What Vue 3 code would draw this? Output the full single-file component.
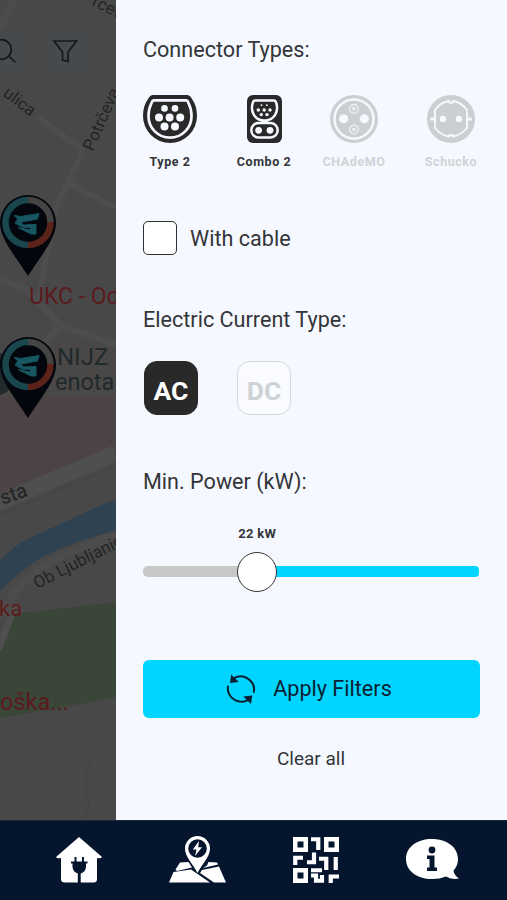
<script setup>
import { ref } from 'vue'

const withCable = ref(false)
const power = ref(22)
const thumbAt = ref(34)
const current = ref('AC')
const pins = [{ x: 28, y: 196 }, { x: 28, y: 338 }]
</script>

<template>
  <div class="app">
    <div class="main">
      <svg class="map" viewBox="0 0 116 820">
        <rect width="116" height="820" fill="#484848" />
        <g fill="none" stroke="#4d4d4d" stroke-width="8">
          <path d="M14 0L-4 36" />
          <path d="M38 117L84 151M84 151L68 182L56 208L38 300M68 182L116 208" stroke-width="6" />
          <path d="M-5 278L25 288L60 325L116 345M60 325L35 355" stroke-width="7" />
        </g>
        <path d="M0 392L45 356L62 330L116 350V446L0 495Z" fill="#4a4747" />
        <path d="M0 397H116V448L0 497Z" fill="#4c4444" />
        <path d="M-4 504L116 453" stroke="#4f4f4f" stroke-width="16" />
        <path d="M-4 517L116 466" stroke="#434343" stroke-width="1" />
        <path d="M0 560Q16 544 32 537L108 502L116 501V530Q60 546 34 562Q16 575 0 591Z" fill="#2e4252" />
        <path d="M0 618Q13 590 34 573T116 535" fill="none" stroke="#4c4c4c" stroke-width="8" />
        <path d="M14 614L116 602V697L70 706L0 718V650Z" fill="#3a4638" />
        <path d="M-2 650L15 606" stroke="#4f4f4f" stroke-width="7" />
        <path d="M90 762Q82 780 89 800L87 820" fill="none" stroke="#454545" stroke-width="2" />
        <rect x="-18" y="29" width="46" height="45" rx="5" fill="#464a4c" />
        <rect x="44" y="29" width="43" height="45" rx="5" fill="#464a4c" />
        <g fill="none" stroke="#181818" stroke-width="1.7">
          <circle cx="1.5" cy="49.5" r="9.8" />
          <path d="M8 55.5L15.5 62.5" />
          <path d="M54 41H76.500L68 52V61.500L62.500 60V52Z" />
        </g>
        <g fill="#232323" stroke="#4b4b4b" stroke-width="1.5" paint-order="stroke">
          <text transform="translate(2 95) rotate(38)" font-size="17">ulica</text>
          <text transform="translate(93 152) rotate(-66)" font-size="17">Potrčeva</text>
          <text transform="translate(91 5) rotate(27)" font-size="17">rčeva</text>
          <text transform="translate(-4 507) rotate(-19)" font-size="20">rsta</text>
          <text transform="translate(37 589) rotate(-27)" font-size="17">Ob Ljubljanici</text>
        </g>
        <g class="poi">
          <text x="29" y="304" font-size="23">UKC - Od</text>
          <text x="-1" y="616" font-size="22">ka</text>
          <text x="0" y="710" font-size="23.500">oška...</text>
        </g>
        <g fill="#202a2d">
          <circle cx="-6" cy="374" r="22" />
          <text x="57" y="365" font-size="24">NIJZ</text>
          <text x="55" y="390" font-size="23.500">enota</text>
        </g>
        <g v-for="(p, i) in pins" :key="i" :transform="`translate(${p.x} ${p.y})`">
          <path d="M0 -1A28 28 0 0 1 28 27C28 42 15 57 0 80C-15 57 -28 42 -28 27A28 28 0 0 1 0 -1Z" fill="#03060d" />
          <g fill="none" stroke-width="6.500">
            <path d="M0 49A22.500 22.500 0 0 1 0 4" stroke="#1a464e" />
            <path d="M0 4A22.500 22.500 0 0 1 22.500 26" stroke="#444" />
            <path d="M22.500 26A22.500 22.500 0 0 1 0 49" stroke="#5b2319" />
          </g>
          <path d="M-14 19.500L-7 20.500L11 17.500L9.500 23L-7 26L-5 29L8 28.500V38H3L-10 31.500L-5 32.500L2 34L3 31.500L-6 31L-13 27L-10 23Z" fill="#175762" stroke="#175762" stroke-linejoin="round" />
        </g>
      </svg>

      <section class="panel">
        <h2 class="heading">Connector Types:</h2>
        <ul class="connectors">
          <li>
            <svg width="54" height="48" viewBox="0 0 54 48">
              <path d="M10 0H44Q47 0 49 4Q54 11 54 21A27 27 0 0 1 0 21Q0 11 5 4Q7 0 10 0Z" fill="#292929" />
              <path d="M11 5.4H43Q44.500 5.400 45.500 8Q48.500 14 48.500 21.200A21.500 21.500 0 0 1 5.500 21.200Q5.500 14 8.500 8Q9.500 5.400 11 5.400Z" fill="none" stroke="#f5f9ff" stroke-width="2.700" />
              <g fill="#f5f9ff">
                <circle cx="21.5" cy="13.4" r="3.3" /><circle cx="32" cy="13.4" r="3.3" />
                <circle cx="16" cy="22.4" r="4" /><circle cx="26.6" cy="22.4" r="4" /><circle cx="37.2" cy="22.4" r="4" />
                <circle cx="21.5" cy="31.4" r="4" /><circle cx="32" cy="31.4" r="4" />
              </g>
            </svg>
            <span>Type 2</span>
          </li>
          <li>
            <svg width="35" height="48" viewBox="0 0 35 48">
              <rect width="35" height="48" rx="6" fill="#292929" />
              <g fill="none" stroke="#f5f9ff" stroke-width="2.5">
                <path d="M8 5.5H27Q28.5 5.5 29.3 8C32 17 27 25.5 17.5 25.5S3 17 5.7 8Q6.5 5.5 8 5.5Z" />
                <rect x="4.3" y="28" width="26.4" height="14.5" rx="7.2" />
              </g>
              <path d="M14 25H21V29H14Z" fill="#f5f9ff" />
              <g fill="#f5f9ff">
                <circle cx="14.5" cy="10.2" r=".9" /><circle cx="19.8" cy="10.2" r=".9" />
                <circle cx="11.3" cy="15" r="1.7" /><circle cx="17.2" cy="15" r="1.7" /><circle cx="23" cy="15" r="1.7" />
                <circle cx="14.3" cy="19.6" r="1.7" /><circle cx="20" cy="19.6" r="1.7" />
                <circle cx="11.6" cy="35.3" r="3.4" /><circle cx="23" cy="35.3" r="3.4" />
              </g>
            </svg>
            <span>Combo 2</span>
          </li>
          <li class="off">
            <svg width="48" height="48" viewBox="0 0 48 48">
              <circle cx="24" cy="24" r="24" fill="#cbcfd2" />
              <circle cx="24" cy="24" r="19.5" fill="none" stroke="#f5f9ff" stroke-width="2.5" />
              <circle cx="13.6" cy="23.8" r="4.5" fill="#f5f9ff" /><circle cx="34.4" cy="23.8" r="4.5" fill="#f5f9ff" />
              <g fill="none" stroke="#eef2f6" stroke-width="1.3">
                <circle cx="24" cy="13.8" r="4.3" /><circle cx="24" cy="34.5" r="4.3" />
                <circle cx="24" cy="13.8" r="1.3" /><circle cx="24" cy="34.5" r="1.3" />
              </g>
            </svg>
            <span>CHAdeMO</span>
          </li>
          <li class="off">
            <svg width="48" height="48" viewBox="0 0 48 48">
              <circle cx="24" cy="24" r="24" fill="#cbcfd2" />
              <path d="M8 15Q14 7 22 6Q22 8 24 8T26 6Q34 7 40 15V33Q34 40 26 41.500Q26 40 24 40T22 41.500Q14 40 8 33Z" fill="none" stroke="#f5f9ff" stroke-width="1.900" />
              <path d="M4.500 24H7M41 24H43.500" stroke="#f5f9ff" stroke-width="3" stroke-linecap="round" />
              <circle cx="16" cy="24" r="3.2" fill="#f5f9ff" /><circle cx="32" cy="24" r="3.2" fill="#f5f9ff" />
            </svg>
            <span>Schucko</span>
          </li>
        </ul>

        <label class="cable">
          <input v-model="withCable" type="checkbox" />
          <span>With cable</span>
        </label>

        <h2 class="heading">Electric Current Type:</h2>
        <div class="currents">
          <button v-for="c in ['AC', 'DC']" :key="c" :class="{ active: current === c }" @click="current = c">{{ c }}</button>
        </div>

        <h2 class="heading">Min. Power (kW):</h2>
        <div class="slider">
          <div class="before" :style="{ width: thumbAt + '%' }"></div>
          <div class="after"></div>
          <div class="thumb" :style="{ left: thumbAt + '%' }"><span>{{ power }} kW</span></div>
        </div>

        <button class="apply">
          <svg width="30" height="30" viewBox="0 0 30 30">
            <g fill="none" stroke="#0b1f33" stroke-width="2" stroke-linecap="round">
              <path d="M8 4.2Q15 .4 21.5 4.4C26.5 7.7 29 12.5 27.8 18" />
              <path d="M2 12.5C1 18 4 23.5 9 26.2Q15 29.3 21.5 26.3" />
            </g>
            <path d="M5.200 .500L4 9L12.800 8ZM17.200 22.500L26.300 21.500L25 30Z" fill="#0b1f33" />
          </svg>
          <span>Apply Filters</span>
        </button>
        <button class="clear">Clear all</button>
      </section>
    </div>

    <nav class="nav">
      <svg width="46" height="46" viewBox="0 0 46 46">
        <path d="M23 0L46 20Q45 22 41 21V42Q41 45.500 37.500 45.500H24.700V36.500Q29.500 35 30 30V26.500H31.500V24.500H28V20H26V24.500H20.500V20H18.500V24.500H15V26.500H16.500V30Q17 35 21.800 36.500V45.500H9Q5 45.500 5 42V21Q1 22 0 20Z" fill="#fff" />
      </svg>
      <svg width="57" height="47" viewBox="0 0 57 47">
        <path d="M11 26.500L19.500 26L23 31.500L8 35L6.500 33.500ZM4.500 36L22 33.500L41 46.500H0ZM38 29.500L39.500 26L48 26.500L49 28.500L34 32ZM33 34L50 30.500L57 46.500H45L31 37Z" fill="#fff" />
        <path d="M28.500 0A12.500 12.500 0 0 1 41 12.500C41 21 33 28 28.500 37C24 28 16 21 16 12.500A12.500 12.500 0 0 1 28.500 0Z" fill="#fff" />
        <circle cx="28.500" cy="12.500" r="9.300" fill="#06152e" />
        <path d="M30 5L23.800 13.500H27.500L26 20L33 11.200H29.200Z" fill="#fff" />
      </svg>
      <svg width="46" height="46" viewBox="0 0 46 46">
        <g fill="none" stroke="#fff" stroke-width="4.500">
          <path d="M2.250 2.250H12.750V12.750H2.250ZM33.250 2.250H43.750V12.750H33.250ZM2.250 33.250H12.750V43.750H2.250Z" />
          <path d="M18 2.250H25.250V13M2.250 28V20.750H10M21 15.500V25.250H14M26 21.750H33.250V33M42.750 20V33M18 33.250H29M18 38.500H23V43.750H31M29 38V45M37.750 46V39.500H46" stroke-width="4.200" />
        </g>
      </svg>
      <svg width="53" height="42" viewBox="0 0 53 42">
        <path d="M26 0C41 0 52 8.500 52 20Q52 27 47.500 31.500Q48 36 53 39.500Q45 41 40 37.500Q34 40 26 40C11 40 0 32 0 20S11 0 26 0Z" fill="#fff" />
        <path d="M21 16.500H28.500V28.500H31V32H21V28.500H23.500V20H21Z" fill="#06152e" />
        <circle cx="26" cy="11" r="3.400" fill="#06152e" />
      </svg>
    </nav>
  </div>
</template>

<style>
body {
  margin: 0;
}
</style>

<style scoped>
.app {
  width: 507px;
  height: 900px;
  overflow: hidden;
  display: flex;
  flex-direction: column;
  font-family: Roboto, sans-serif;
  color: #333538;
}
.main {
  height: 820px;
  display: flex;
}
.map {
  width: 116px;
  height: 820px;
  flex: none;
  display: block;
}
.poi {
  fill: #5c1a1d;
}
.panel {
  flex: 1;
  min-width: 0;
  box-sizing: border-box;
  padding: 35px 27px 0;
  background: #f5f9ff;
  display: flex;
  flex-direction: column;
}
.heading {
  margin: 0;
  font-size: 21.6px;
  font-weight: 400;
  line-height: 30px;
  white-space: nowrap;
}
.connectors {
  list-style: none;
  margin: 30px -25px 0 -20px;
  padding: 0;
  display: grid;
  grid-template-columns: 94px 94px 86px 108px;
}
.connectors li {
  display: flex;
  flex-direction: column;
  align-items: center;
  gap: 11px;
  font-size: 12.5px;
  letter-spacing: 0.55px;
  font-weight: 700;
  line-height: 16px;
}
.connectors .off {
  color: #cfd3d6;
}
.cable {
  margin-top: 50px;
  height: 35px;
  display: flex;
  align-items: center;
  gap: 13px;
  font-size: 21.6px;
}
.cable span {
  padding-top: 2px;
}
.cable input {
  appearance: none;
  box-sizing: border-box;
  width: 34px;
  height: 34px;
  margin: 0;
  border: 1.5px solid #303030;
  border-radius: 5px;
  background: #fff;
}
.cable + .heading {
  margin-top: 50px;
}
button {
  font-family: inherit;
  padding: 0;
  color: inherit;
}
.currents {
  margin: 26px 0 52px 1px;
  display: flex;
  gap: 39px;
}
.currents button {
  width: 54px;
  height: 54px;
  border: 1px solid #d5d8da;
  border-radius: 13px;
  background: #f9fbfe;
  color: #cfd2d4;
  font-size: 26.5px;
  font-weight: 700;
  padding-top: 5px;
}
.currents button.active {
  background: #292929;
  border-color: #292929;
  color: #fff;
}
.slider {
  position: relative;
  margin: 69px 1px 0 0;
  height: 11px;
  display: flex;
}
.before {
  background: #c8c8c8;
  border-radius: 5px 0 0 5px;
}
.after {
  flex: 1;
  background: #00d5ff;
  border-radius: 0 4px 4px 0;
}
.thumb {
  position: absolute;
  top: 50%;
  width: 40px;
  height: 40px;
  box-sizing: border-box;
  border: 1px solid #333;
  border-radius: 50%;
  background: #fff;
  transform: translate(-50%, -50%);
}
.thumb span {
  position: absolute;
  bottom: 48px;
  left: 50%;
  transform: translateX(-50%);
  white-space: nowrap;
  font-size: 13px;
  letter-spacing: 0.3px;
  font-weight: 700;
  line-height: 18px;
}
.apply {
  margin-top: 83px;
  height: 58px;
  border: 0;
  border-radius: 6px;
  background: #00d5ff;
  color: #0b1f33;
  font-size: 21.6px;
  display: flex;
  align-items: center;
  justify-content: center;
  gap: 17px;
  padding-right: 5px;
}
.apply span {
  padding-bottom: 2px;
}
.clear {
  align-self: center;
  margin: 27px 1px 0 0;
  border: 0;
  background: none;
  font-size: 19px;
  line-height: 28px;
}
.nav {
  height: 80px;
  box-sizing: border-box;
  padding: 0 48px 2px 56px;
  border-top: 1px solid #1c2735;
  background: #06152e;
  display: flex;
  align-items: center;
  justify-content: space-between;
}
</style>
